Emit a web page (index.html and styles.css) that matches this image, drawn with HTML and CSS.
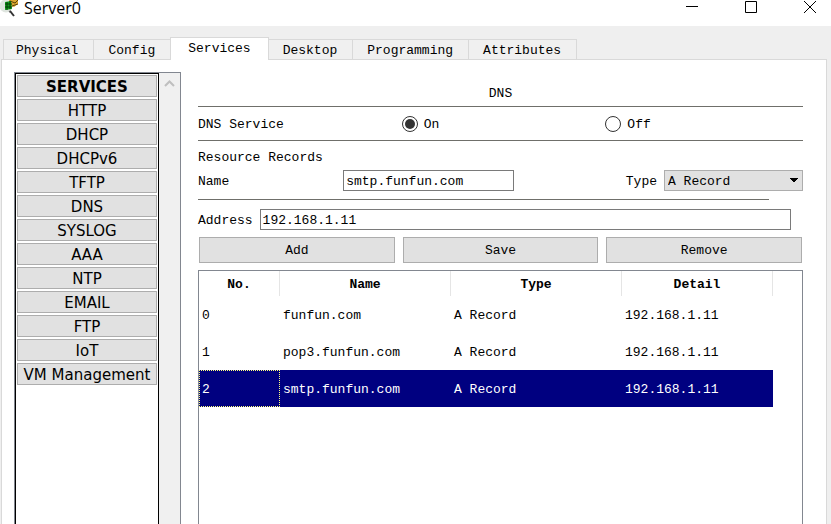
FILE: index.html
```html
<!DOCTYPE html>
<html lang="en">
<head>
    <meta charset="UTF-8">
    <meta name="viewport" content="width=device-width, initial-scale=1.0">
    <title>Server0</title>
    <link rel="stylesheet" href="styles.css">
</head>
<body>
    <!-- Title bar -->
    <header class="titlebar">
        <svg class="app-icon" width="20" height="18" viewBox="0 0 20 18">
            <circle cx="6" cy="6" r="6.500" fill="#dfe5df"/>
            <path d="M9 0h9v4l-4 3-4-1z" fill="#d9a52f"/>
            <path d="M10 1l5 2 3-3M12 6l6-2" stroke="#5c4308" fill="none"/>
            <path d="M5 2l6-1 1 8-7 1z" fill="#12a01c"/>
            <path d="M5 4h7M5 7h7M7 2v8M10 1v8" stroke="#053a08" fill="none"/>
            <path d="M9 12l2-1" stroke="#999" stroke-width="2"/>
            <path d="M10 11l4 5" stroke="#333" stroke-width="2"/>
        </svg>
        <h1 class="title">Server0</h1>
        <div class="window-buttons">
            <button type="button" aria-label="Minimize">
                <svg width="14" height="14" viewBox="0 0 14 14"><path d="M1 6.5h12" stroke="#000"/></svg>
            </button>
            <button type="button" aria-label="Maximize">
                <svg width="14" height="14" viewBox="0 0 14 14"><path d="M1.5 1.5h11v11h-11z" fill="none" stroke="#000"/></svg>
            </button>
            <button type="button" aria-label="Close">
                <svg width="14" height="14" viewBox="0 0 14 14"><path d="M1 1l12 12M13 1L1 13" stroke="#000"/></svg>
            </button>
        </div>
    </header>

    <!-- Tabs -->
    <nav class="tabs">
        <button type="button" class="tab">Physical</button>
        <button type="button" class="tab">Config</button>
        <button type="button" class="tab active">Services</button>
        <button type="button" class="tab">Desktop</button>
        <button type="button" class="tab">Programming</button>
        <button type="button" class="tab">Attributes</button>
    </nav>

    <div class="pane">
        <!-- Service list -->
        <aside class="sidebar">
            <div class="service-list">
                <button type="button" class="service heading">SERVICES</button>
                <button type="button" class="service">HTTP</button>
                <button type="button" class="service">DHCP</button>
                <button type="button" class="service">DHCPv6</button>
                <button type="button" class="service">TFTP</button>
                <button type="button" class="service">DNS</button>
                <button type="button" class="service">SYSLOG</button>
                <button type="button" class="service">AAA</button>
                <button type="button" class="service">NTP</button>
                <button type="button" class="service">EMAIL</button>
                <button type="button" class="service">FTP</button>
                <button type="button" class="service">IoT</button>
                <button type="button" class="service">VM Management</button>
            </div>
            <div class="scrollbar">
                <svg width="11" height="8" viewBox="0 0 11 8"><path d="M1 7l4.500-4.500 4.500 4.500" fill="none" stroke="#bfbfbf" stroke-width="2"/></svg>
            </div>
        </aside>

        <!-- DNS settings -->
        <main class="dns">
            <h2 class="dns-title">DNS</h2>
            <div class="service-row" role="radiogroup" aria-labelledby="service-label">
                <span id="service-label">DNS Service</span>
                <label class="radio"><input type="radio" name="service" checked><span>On</span></label>
                <label class="radio"><input type="radio" name="service"><span>Off</span></label>
            </div>

            <div class="records-title">Resource Records</div>
            <div class="name-row">
                <label class="name-label" for="name">Name</label>
                <input class="name-input" type="text" id="name" value="smtp.funfun.com">
                <label class="type-label" for="type">Type</label>
                <select class="type-select" id="type">
                    <option>A Record</option>
                </select>
            </div>
            <div class="short-line"></div>
            <div class="address-row">
                <label for="address">Address</label>
                <input class="address-input" type="text" id="address" value="192.168.1.11">
            </div>
            <div class="actions">
                <button type="button">Add</button>
                <button type="button">Save</button>
                <button type="button">Remove</button>
            </div>

            <div class="table-box">
                <table class="records">
                    <thead>
                        <tr><th class="no">No.</th><th class="name">Name</th><th class="type">Type</th><th class="detail">Detail</th></tr>
                    </thead>
                    <tbody>
                        <tr><td>0</td><td>funfun.com</td><td>A Record</td><td>192.168.1.11</td></tr>
                        <tr><td>1</td><td>pop3.funfun.com</td><td>A Record</td><td>192.168.1.11</td></tr>
                        <tr class="selected"><td>2</td><td>smtp.funfun.com</td><td>A Record</td><td>192.168.1.11</td></tr>
                    </tbody>
                </table>
            </div>
        </main>
    </div>
</body>
</html>
```
FILE: styles.css
```css
* {
    box-sizing: border-box;
}
body {
    margin: 0;
    height: 100vh;
    display: flex;
    flex-direction: column;
    overflow: hidden;
    background-color: #efefef;
    color: #000;
    font-family: "Liberation Mono", monospace;
    font-size: 13px;
    line-height: 16px;
}
button, input, select {
    margin: 0;
    font: inherit;
    color: inherit;
    border-radius: 0;
}
/* Title bar */
.titlebar {
    display: flex;
    align-items: flex-start;
    height: 26px;
    flex-shrink: 0;
    background-color: #fff;
}
.title {
    flex: 1;
    margin: 0 0 0 4px;
    font-family: "Open Sans", sans-serif;
    font-size: 16px;
    font-weight: normal;
    line-height: 16px;
}
.window-buttons {
    display: flex;
    gap: 45px;
    padding-right: 14px;
}
.window-buttons button {
    display: flex;
    padding: 0;
    border: none;
    background: none;
}
/* Tabs */
.tabs {
    z-index: 1;
    display: flex;
    align-items: flex-end;
    height: 34px;
    flex-shrink: 0;
    padding-left: 3px;
    margin-bottom: -1px;
}
.tab {
    height: 21px;
    padding: 2px 15px 0 14px;
    border: 1px solid #d9d9d9;
    border-left: none;
    background-color: #f0f0f0;
}
.tab:first-child {
    padding-left: 12px;
    border-left: 1px solid #d9d9d9;
}
.tab.active {
    height: 23px;
    margin-left: -1px;
    padding: 0 17px;
    border-left: 1px solid #d9d9d9;
    border-bottom: none;
    background-color: #fff;
}
/* Content pane */
.pane {
    flex: 1;
    min-height: 0;
    display: flex;
    gap: 17px;
    margin: 0 4px 0 1px;
    padding: 12px 23px 0 12px;
    border: 1px solid #d9d9d9;
    border-bottom: none;
    background-color: #fff;
}
.sidebar {
    display: flex;
    width: 167px;
    flex-shrink: 0;
    border: 1px solid #828790;
    border-bottom: none;
}
.service-list {
    flex: 1;
    display: flex;
    flex-direction: column;
    gap: 2px;
    padding: 1px;
    border: 1px solid #000;
    border-bottom: none;
}
.service {
    height: 22px;
    padding: 2px 0 0;
    border: 1px solid #adadad;
    background-color: #e1e1e1;
    font-family: "DejaVu Sans", sans-serif;
    font-size: 15px;
    line-height: 18px;
    white-space: nowrap;
}
.service.heading {
    font-weight: bold;
}
.scrollbar {
    width: 21px;
    padding: 6px 5px;
    background-color: #f0f0f0;
}
.scrollbar svg {
    display: block;
}
/* DNS settings */
.dns {
    flex: 1;
    display: flex;
    flex-direction: column;
}
.dns-title {
    margin: 0;
    padding: 14px 0 4px;
    font-size: 13px;
    font-weight: normal;
    text-align: center;
}
.service-row {
    display: grid;
    grid-template-columns: repeat(3, 1fr);
    gap: 6px;
    align-items: center;
    height: 35px;
    border-top: 1px solid #6f6f6a;
    border-bottom: 1px solid #6f6f6a;
}
.service-row span, .name-row label, .address-row label {
    padding-top: 2px;
}
.radio {
    display: flex;
    align-items: center;
    gap: 6px;
}
.radio input {
    appearance: none;
    width: 16px;
    height: 16px;
    border: 1px solid #333;
    border-radius: 50%;
    background-color: #fff;
}
.radio input:checked {
    padding: 2px;
    background-color: #333;
    background-clip: content-box;
}
.records-title {
    padding: 9px 0 4px;
}
.name-row {
    display: flex;
    align-items: center;
}
.name-label {
    width: 24%;
}
.name-input, .address-input {
    height: 21px;
    padding: 2px 2px 0;
    border: 1px solid #7a7a7a;
    background-color: #fff;
}
.name-input {
    width: 171px;
}
.type-label {
    margin-left: auto;
    padding-right: 7px;
}
.type-select {
    appearance: none;
    width: 139px;
    height: 21px;
    padding: 2px 3px 0;
    border: 1px solid #adadad;
    background: linear-gradient(to bottom right, #000 50%, transparent 50%) right 4px top 7px / 4px 5px no-repeat, linear-gradient(to bottom left, #000 50%, transparent 50%) right 8px top 7px / 4px 5px no-repeat, #e1e1e1;
}
.short-line {
    height: 1px;
    margin: 8px 34px 9px 0;
    background-color: #6f6f6a;
}
.address-row {
    display: flex;
    align-items: center;
    gap: 7px;
    padding-right: 12px;
}
.address-input {
    flex: 1;
}
.actions {
    display: grid;
    grid-template-columns: repeat(3, 1fr);
    gap: 8px;
    padding: 7px 1px;
}
.actions button {
    height: 26px;
    padding: 2px 0 0;
    border: 1px solid #adadad;
    background-color: #e1e1e1;
}
/* Records table */
.table-box {
    flex: 1;
    border: 1px solid #828790;
    border-bottom: none;
}
.records {
    width: 574px;
    table-layout: fixed;
    border-collapse: separate;
    border-spacing: 0;
}
.records th {
    height: 25px;
    padding: 2px 0 0;
    border-right: 1px solid #e5e5e5;
}
.records td {
    height: 37px;
    padding: 2px 3px 0;
}
.records .no {
    width: 81px;
}
.records .name, .records .type {
    width: 171px;
}
.selected {
    background-color: #000080;
    color: #fff;
}
.selected td:first-child {
    padding: 2px 2px 0;
    border: 1px dotted #ffff7f;
}
```
